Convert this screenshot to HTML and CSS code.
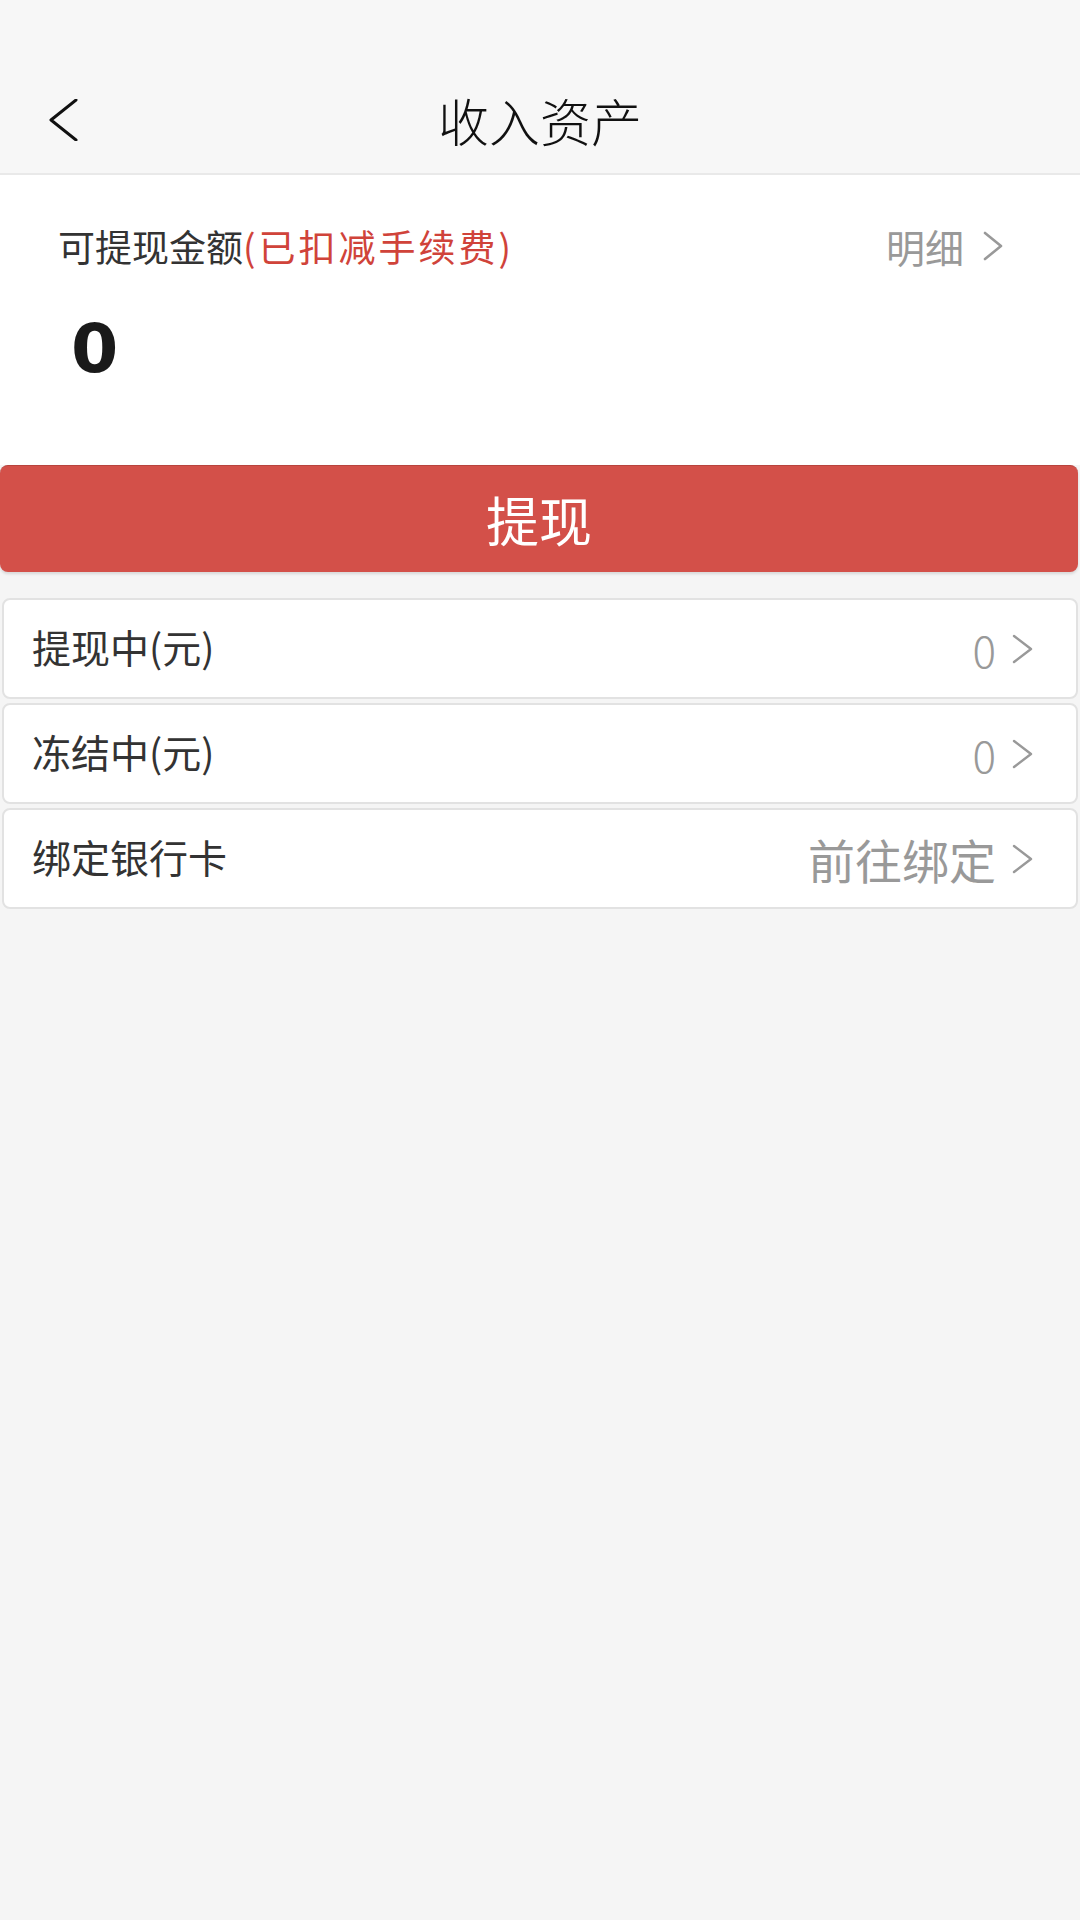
FILE: index.html
```html
<!DOCTYPE html>
<html>
<head>
    <meta charset="utf-8">
    <link rel="stylesheet" href="styles.css">
</head>
<body>
    <div class="header">
        <div class="nav">
            <a class="back">
                <svg width="30" height="42" viewBox="0 0 30 42"><path d="M28 1 L3 21 L28 41" fill="none" stroke="#111" stroke-width="3" stroke-linecap="round" stroke-linejoin="round"/></svg>
            </a>
            <div class="title">收入资产</div>
            <div></div>
        </div>
    </div>

    <div class="summary">
        <div class="summary-top">
            <div class="label">可提现金额<span class="fee">(已扣减手续费)</span></div>
            <a class="detail">明细
                <svg width="20" height="30" viewBox="0 0 20 30"><path d="M2 2 L18 15 L2 28" fill="none" stroke="#999" stroke-width="2.6" stroke-linecap="round" stroke-linejoin="round"/></svg>
            </a>
        </div>
        <div class="amount">0</div>
    </div>

    <button class="btn">提现</button>

    <div class="list">
        <div class="row">
            <span class="row-label">提现中(元)</span>
            <span class="row-value">0
                <svg width="22" height="30" viewBox="0 0 22 30"><path d="M2 2 L19 15 L2 28" fill="none" stroke="#999" stroke-width="2.4" stroke-linecap="round" stroke-linejoin="round"/></svg>
            </span>
        </div>
        <div class="row">
            <span class="row-label">冻结中(元)</span>
            <span class="row-value">0
                <svg width="22" height="30" viewBox="0 0 22 30"><path d="M2 2 L19 15 L2 28" fill="none" stroke="#999" stroke-width="2.4" stroke-linecap="round" stroke-linejoin="round"/></svg>
            </span>
        </div>
        <div class="row">
            <span class="row-label">绑定银行卡</span>
            <span class="row-value bind">前往绑定
                <svg width="22" height="30" viewBox="0 0 22 30"><path d="M2 2 L19 15 L2 28" fill="none" stroke="#999" stroke-width="2.4" stroke-linecap="round" stroke-linejoin="round"/></svg>
            </span>
        </div>
    </div>
</body>
</html>
```

FILE: styles.css
```css
body {
    margin: 0;
    min-height: 100vh;
    background: #f5f5f5;
    font-family: "Noto Sans CJK SC", "Noto Sans", sans-serif;
    color: #333;
}
.header {
    background: #f7f7f7;
    padding-top: 70px;
    height: 103px;
    border-bottom: 2px solid #e9e9e9;
}
.nav {
    height: 100px;
    display: grid;
    grid-template-columns: 1fr auto 1fr;
    align-items: center;
}
.back {
    display: flex;
    align-items: center;
    padding-left: 48px;
}
.title {
    font-size: 51px;
    font-weight: 300;
    color: #111;
}
.summary {
    background: white;
    padding: 46px 77px 76px 58px;
}
.summary-top {
    display: flex;
    justify-content: space-between;
    align-items: center;
    height: 50px;
}
.label {
    font-size: 37px;
    color: #333;
}
.fee {
    color: #d0433a;
    letter-spacing: 3px;
}
.detail {
    display: flex;
    align-items: center;
    gap: 19px;
    font-size: 39px;
    color: #999;
}
.amount {
    margin-top: 38px;
    padding-left: 13px;
    height: 80px;
    line-height: 80px;
    font-family: "DejaVu Sans", Verdana, sans-serif;
    font-weight: bold;
    font-size: 68px;
    color: #1a1a1a;
}
.btn {
    display: block;
    width: 1078px;
    height: 107px;
    border: none;
    border-top: 1px solid #b8433d;
    border-radius: 8px;
    background: #d35049;
    color: white;
    font-family: inherit;
    font-size: 53px;
    box-shadow: 0 2px 3px rgba(0,0,0,0.12);
}
.list {
    margin-top: 26px;
    display: flex;
    flex-direction: column;
    gap: 4px;
    padding: 0 2px;
}
.row {
    height: 97px;
    background: white;
    border: 2px solid #e2e2e2;
    border-radius: 8px;
    display: flex;
    justify-content: space-between;
    align-items: center;
    padding: 0 42px 0 28px;
}
.row-label {
    font-size: 39px;
    color: #333;
    margin-bottom: 6px;
}
.row-value {
    display: flex;
    align-items: center;
    gap: 16px;
    font-size: 44px;
    font-weight: 300;
    color: #999;
}
.row-value.bind {
    font-size: 47px;
    font-weight: normal;
}
```
